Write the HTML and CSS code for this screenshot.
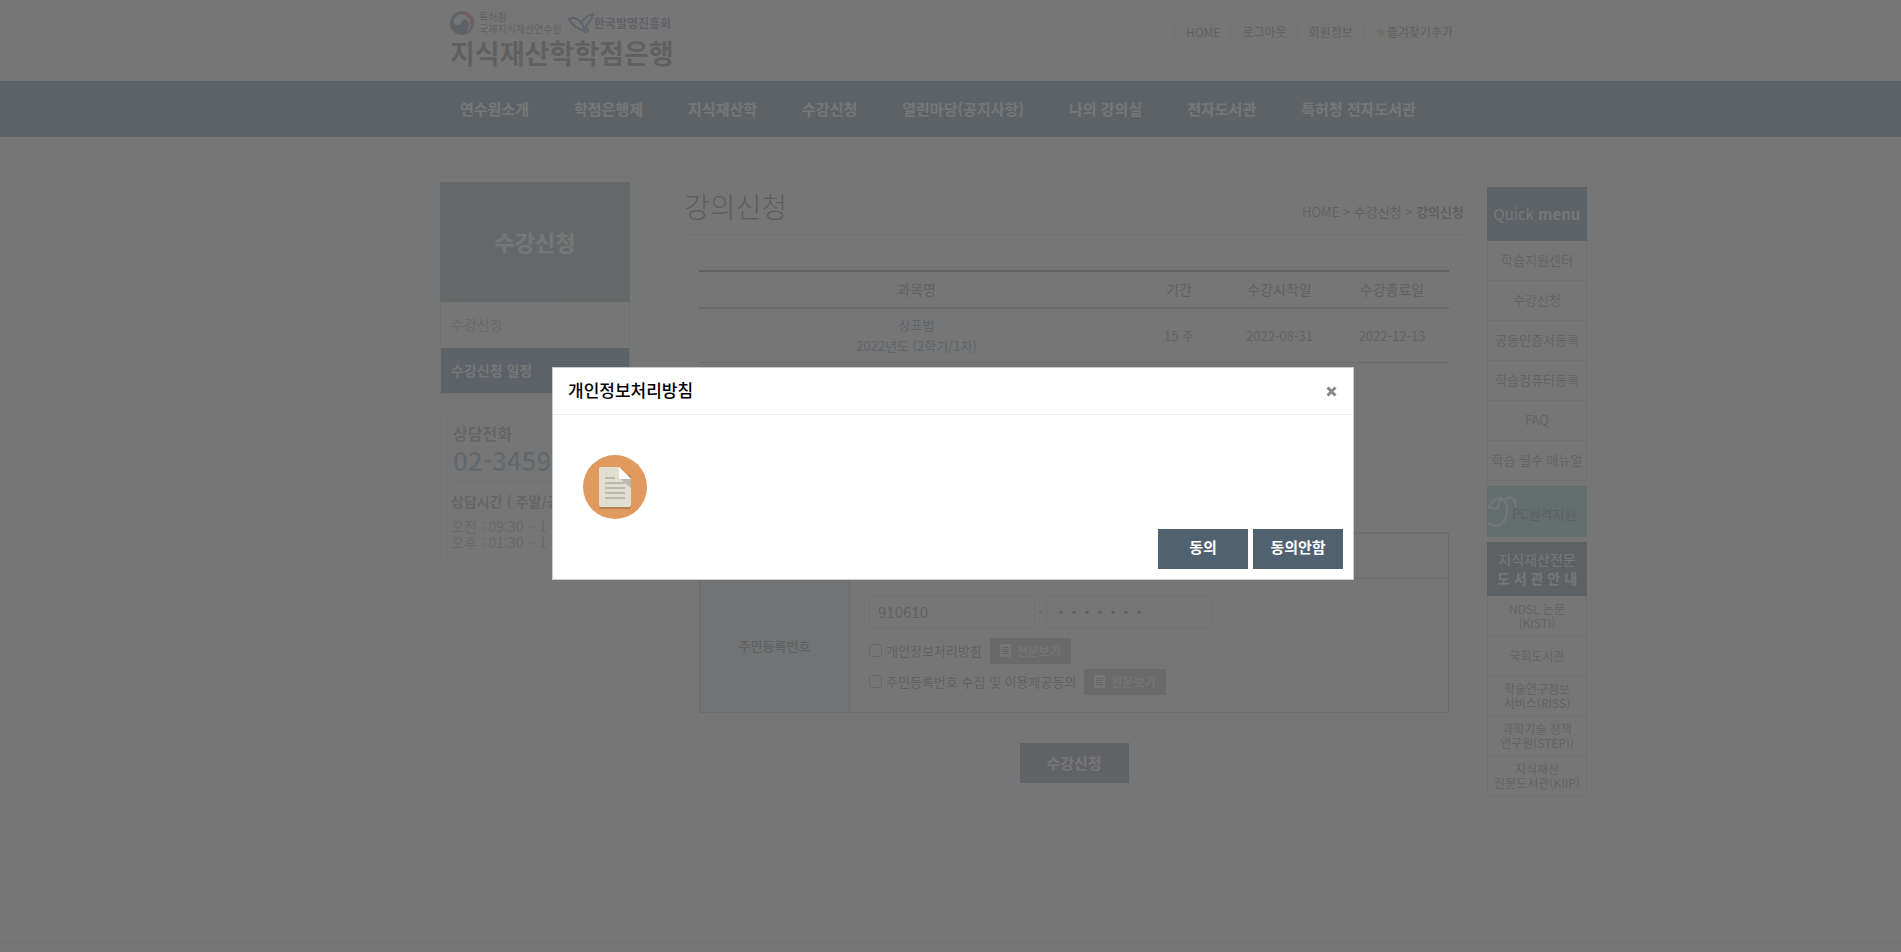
FILE: index.html
```html
<!DOCTYPE html>
<html lang="ko">
<head>
    <meta charset="UTF-8">
    <meta name="viewport" content="width=device-width, initial-scale=1.0">
    <title>지식재산학학점은행 - 강의신청</title>
    <link rel="stylesheet" href="styles.css">
</head>
<body>
    <header class="header">
        <div class="inner header-inner">
            <a class="logo" href="#">
                <span class="logo-partners">
                    <svg class="logo-gov" viewBox="0 0 24 24" aria-hidden="true">
                        <circle cx="12" cy="12" r="12" fill="#003a60"/>
                        <path d="M4 12C3 7 7 3.500 12 3.500C18 4 21 9 20.500 14C20 18 18 21 16 23C19 18 20 13 18 10C16 7 12.500 8.500 12 11C11 14 7 15.500 4 12Z" fill="#fff"/>
                        <path d="M6 4C11 -1 19 0 22.500 6C25.500 12 23 20 16 23.500C20 19 22 14 20 9C17 3 11 2 6 4Z" fill="#e0103c"/>
                    </svg>
                    <span class="logo-gov-text">특허청<br>국제지식재산연수원</span>
                    <svg class="logo-kipa" viewBox="0 0 26 20" aria-hidden="true">
                        <path d="M1 6C6 3 13 7 15 13L17 18C10 17 3 11 1 6Z" fill="none" stroke="#101a80" stroke-width="2"/>
                        <path d="M13 10C16 5 20 2 25 1C24 6 21 10 17 14" fill="none" stroke="#10509c" stroke-width="2"/>
                        <circle cx="18" cy="17" r="3" fill="#1070b0"/>
                    </svg>
                    <strong class="logo-kipa-text">한국발명진흥회</strong>
                </span>
                <strong class="logo-title">지식재산학학점은행</strong>
            </a>
            <ul class="util">
                <li><a href="#">HOME</a></li>
                <li><a href="#">로그아웃</a></li>
                <li><a href="#">회원정보</a></li>
                <li>
                    <a href="#">
                        <svg class="star" viewBox="0 0 12 12" aria-hidden="true"><path d="M6 0l1.700 4.200 4.300.3-3.300 2.800 1.100 4.500L6 9.400l-3.800 2.400 1.100-4.500L0 4.500l4.300-.3z" fill="#c8d23c"/></svg>즐겨찾기추가
                    </a>
                </li>
            </ul>
        </div>
    </header>

    <nav class="gnb">
        <ul class="inner gnb-list">
            <li><a href="#">연수원소개</a></li>
            <li><a href="#">학점은행제</a></li>
            <li><a href="#">지식재산학</a></li>
            <li><a href="#">수강신청</a></li>
            <li><a href="#">열린마당(공지사항)</a></li>
            <li><a href="#">나의 강의실</a></li>
            <li><a href="#">전자도서관</a></li>
            <li><a href="#">특허청 전자도서관</a></li>
        </ul>
    </nav>

    <div class="inner layout">
        <aside class="side">
            <h2 class="side-title">수강신청</h2>
            <ul class="side-menu">
                <li><a href="#">수강신청</a></li>
                <li><a class="active" href="#">수강신청 일정</a></li>
            </ul>
            <div class="contact">
                <h3>상담전화</h3>
                <p class="tel">02-3459-</p>
                <h4>상담시간 ( 주말/공</h4>
                <p>오전 : 09:30 ~ 1<br>오후 : 01:30 ~ 1</p>
            </div>
        </aside>

        <main class="content">
            <div class="page-head">
                <h1>강의신청</h1>
                <p class="location">HOME &gt; 수강신청 &gt; <strong>강의신청</strong></p>
            </div>

            <div class="content-body">
                <table class="course">
                    <thead>
                        <tr>
                            <th>과목명</th>
                            <th class="col-term">기간</th>
                            <th class="col-start">수강시작일</th>
                            <th class="col-end">수강종료일</th>
                        </tr>
                    </thead>
                    <tbody>
                        <tr>
                            <td><a href="#">상표법<br>2022년도 (2학기/1차)</a></td>
                            <td>15 주</td>
                            <td>2022-08-31</td>
                            <td>2022-12-13</td>
                        </tr>
                    </tbody>
                </table>

                <form class="apply">
                    <table class="apply-table">
                        <tr class="apply-name">
                            <th></th>
                            <td></td>
                        </tr>
                        <tr>
                            <th>주민등록번호</th>
                            <td>
                                <div class="jumin">
                                    <input type="text" value="910610" aria-label="주민등록번호 앞자리">
                                    <span>-</span>
                                    <input class="jumin-back" type="text" value="・・・・・・・" aria-label="주민등록번호 뒷자리">
                                </div>
                                <div class="agree">
                                    <input type="checkbox" id="agree1">
                                    <label for="agree1">개인정보처리방침</label>
                                    <button class="btn-view" type="button">
                                        <svg viewBox="0 0 11 13" aria-hidden="true"><rect width="11" height="13" rx="1" fill="#fff"/><path d="M2 3.500h7M2 5.500h7M2 7.500h7M2 9.500h7" stroke="#555"/></svg>
                                        전문보기
                                    </button>
                                </div>
                                <div class="agree">
                                    <input type="checkbox" id="agree2">
                                    <label for="agree2">주민등록번호 수집 및 이용제공동의</label>
                                    <button class="btn-view" type="button">
                                        <svg viewBox="0 0 11 13" aria-hidden="true"><rect width="11" height="13" rx="1" fill="#fff"/><path d="M2 3.500h7M2 5.500h7M2 7.500h7M2 9.500h7" stroke="#555"/></svg>
                                        전문보기
                                    </button>
                                </div>
                            </td>
                        </tr>
                    </table>
                    <button class="btn-submit" type="button">수강신청</button>
                </form>
            </div>
        </main>

        <aside class="quick">
            <h2 class="quick-title">Quick <strong>menu</strong></h2>
            <ul class="quick-list">
                <li><a href="#">학습지원센터</a></li>
                <li><a href="#">수강신청</a></li>
                <li><a href="#">공동인증서등록</a></li>
                <li><a href="#">학습컴퓨터등록</a></li>
                <li><a href="#">FAQ</a></li>
                <li><a href="#">학습 필수 매뉴얼</a></li>
            </ul>
            <a class="remote" href="#">
                <svg viewBox="0 0 30 34" aria-hidden="true"><path d="M2 12C4 7 8 3 14 3L10 14Q6 14 2 12ZM14 3C20 7 21 12 20 18C19 25 15 31 9 31Q4 31 1 28M18 8C18 3 23 1 26 4C29 6 29 9 28 12" fill="none" stroke="#fff" stroke-width="2"/></svg>
                <span>PC원격지원</span>
            </a>
            <h2 class="library-title">지식재산전문<br><strong>도 서 관 안 내</strong></h2>
            <ul class="quick-list library-list">
                <li><a href="#">NDSL 논문<br>(KISTI)</a></li>
                <li><a href="#">국회도서관</a></li>
                <li><a href="#">학술연구정보<br>서비스(RISS)</a></li>
                <li><a href="#">과학기술 정책<br>연구원(STEPI)</a></li>
                <li><a href="#">지식재산<br>전문도서관(KIIP)</a></li>
            </ul>
        </aside>
    </div>

    <footer class="footer"></footer>

    <!-- Privacy policy modal -->
    <div class="overlay">
        <div class="modal" role="dialog" aria-labelledby="modalTitle">
            <div class="modal-header">
                <h2 id="modalTitle">개인정보처리방침</h2>
                <button class="close-btn" type="button" aria-label="닫기">
                    <svg viewBox="0 0 11 11" aria-hidden="true"><path d="M1.500 1.500l8 8M9.500 1.500l-8 8" stroke="#888" stroke-width="3"/></svg>
                </button>
            </div>
            <div class="modal-body">
                <svg class="doc-icon" viewBox="0 0 64 64" aria-hidden="true">
                    <circle cx="32" cy="32" r="32" fill="#e0995e"/>
                    <path d="M16 20h32v32a2 2 0 0 1-2 2H18a2 2 0 0 1-2-2z" fill="#b87f51"/>
                    <path d="M18 12h18l12 12v26a2 2 0 0 1-2 2H18a2 2 0 0 1-2-2V14a2 2 0 0 1 2-2z" fill="#e0e0d1"/>
                    <path d="M36 12l12 12H38a2 2 0 0 1-2-2z" fill="#fff"/>
                    <path d="M37.500 24H48v9z" fill="#b9b9ac"/>
                    <path d="M22 23h10M22 28h20M22 33h20M22 38h20M22 43h20" stroke="#b9b9ac" stroke-width="2"/>
                </svg>
            </div>
            <div class="modal-footer">
                <button type="button">동의</button>
                <button type="button">동의안함</button>
            </div>
        </div>
    </div>
</body>
</html>
```
FILE: styles.css
```css
/* Reset */
* {
    margin: 0;
    padding: 0;
    box-sizing: border-box;
}

body {
    display: flex;
    flex-direction: column;
    min-height: 100vh;
    font-family: "Noto Sans CJK KR", sans-serif;
    font-size: 13px;
    line-height: 20px;
    color: #222;
    background: #fff;
}

ul {
    list-style: none;
}

a {
    color: inherit;
    text-decoration: none;
}

button,
input {
    font-family: inherit;
}

table {
    width: 100%;
    border-collapse: collapse;
}

.inner {
    width: 100%;
    max-width: 1021px;
    margin: 0 auto;
}

/* Header */
.header-inner {
    display: flex;
    justify-content: space-between;
    height: 81px;
    padding: 9px 8px 0 10px;
}

.logo-partners {
    display: flex;
    align-items: center;
    height: 27px;
}

.logo-gov {
    width: 24px;
    height: 24px;
    margin-right: 5px;
}

.logo-gov-text {
    font-size: 10px;
    line-height: 12px;
}

.logo-kipa {
    width: 26px;
    height: 20px;
    margin-left: 6px;
}

.logo-kipa-text {
    font-size: 12px;
    color: #1f2a6b;
}

.logo-title {
    display: block;
    font-size: 27px;
    line-height: 34px;
    color: #222;
}

.util {
    display: flex;
    padding-top: 15px;
    font-size: 12px;
    line-height: 15px;
}

.util li {
    height: 15px;
    padding: 0 10px 0 11px;
    border-left: 1px solid #ccc;
}

.util li:last-child {
    padding-right: 0;
}

.util a {
    display: flex;
    align-items: center;
}

.star {
    width: 12px;
    height: 12px;
}

/* Main navigation */
.gnb {
    background: #033468;
}

.gnb-list {
    display: flex;
    gap: 45px;
    padding-left: 20px;
    font-size: 15px;
    font-weight: bold;
    line-height: 56px;
    color: #fff;
    white-space: nowrap;
}

.layout {
    display: flex;
    align-items: flex-start;
    padding-top: 45px;
}

/* Left menu */
.side {
    flex: none;
    width: 190px;
    margin-right: 54px;
}

.side-title {
    height: 120px;
    font-size: 22px;
    line-height: 118px;
    text-align: center;
    color: #fff;
    background: linear-gradient(120deg, #56707f 0 38%, #527685 38% 70%, #56707f 70%);
}

.side-menu {
    border: 1px solid #ccc;
    border-top: 0;
    font-size: 14px;
    line-height: 44px;
}

.side-menu a {
    display: block;
    height: 45px;
    padding-left: 10px;
    color: #777;
}

.side-menu li:first-child {
    padding-bottom: 1px;
}

.side-menu .active {
    font-weight: bold;
    color: #fff;
    background: #033474;
}

.contact {
    height: 148px;
    margin-top: 20px;
    padding: 8px 10px;
    border: 1px solid #ddd;
    color: #777;
    font-size: 14px;
    line-height: 16px;
}

.contact h3 {
    padding-left: 2px;
    font-size: 16px;
    line-height: 20px;
    color: #555;
}

.contact .tel {
    margin-bottom: 9px;
    padding: 0 0 4px 2px;
    border-bottom: 1px dashed #aaa;
    font-size: 26px;
    font-weight: 500;
    line-height: 34px;
    color: #3c74aa;
}

.contact h4 {
    margin-bottom: 7px;
    font-size: 14px;
    line-height: 20px;
    color: #555;
}

/* Content */
.content {
    flex: none;
    width: 780px;
}

.page-head {
    display: flex;
    justify-content: space-between;
    height: 53px;
    border-bottom: 1px solid #ccc;
}

.page-head h1 {
    font-size: 28px;
    font-weight: 300;
    line-height: 48px;
    color: #000;
}

.location {
    padding-top: 20px;
}

.content-body {
    padding: 35px 15px 0;
}

.course {
    border-top: 2px solid #333;
    text-align: center;
    color: #444;
}

.course th {
    height: 37px;
    padding-bottom: 2px;
    border-bottom: 2px solid #888;
    font-size: 14px;
    font-weight: 500;
}

.course td {
    height: 54px;
    border-bottom: 1px solid #888;
    line-height: 21px;
}

.course a {
    color: #0c4a7c;
}

.col-term {
    width: 90px;
}

.col-start {
    width: 111px;
}

.col-end {
    width: 114px;
}

.apply {
    margin-top: 169px;
    text-align: center;
}

.apply-table {
    border: 1px solid #999;
    border-top: 2px solid #aaa;
}

.apply-table th {
    width: 150px;
    height: 134px;
    border-right: 1px solid #999;
    font-weight: 500;
    background: #cdd9e6;
}

.apply-table td {
    padding: 4px 20px 0 19px;
    text-align: left;
}

.apply-table .apply-name th {
    height: 46px;
}

.apply-name {
    border-bottom: 1px solid #999;
}

.jumin {
    display: flex;
    align-items: center;
    gap: 3px;
    margin-bottom: 10px;
}

.jumin input {
    width: 166px;
    height: 32px;
    padding-left: 8px;
    border: 1px solid #ccc;
    font-size: 15px;
    color: #222;
    background: #fff;
}

.jumin .jumin-back {
    font-size: 13px;
    font-weight: bold;
}

.agree {
    display: flex;
    align-items: center;
    margin-bottom: 5px;
}

.agree input {
    width: 13px;
    height: 13px;
    margin-right: 4px;
}

.btn-view {
    display: flex;
    align-items: center;
    gap: 6px;
    height: 26px;
    margin-left: 8px;
    padding: 0 10px;
    border: 0;
    font-size: 12px;
    color: #fff;
    background: #888;
}

.btn-view svg {
    width: 11px;
    height: 13px;
}

.btn-submit {
    width: 109px;
    height: 40px;
    margin-top: 30px;
    padding-bottom: 2px;
    border: 0;
    font-size: 15px;
    font-weight: bold;
    color: #fff;
    background: #303854;
}

/* Quick menu */
.quick {
    flex: none;
    width: 100px;
    margin: 5px 0 0 23px;
    text-align: center;
}

.quick-title {
    font-size: 15px;
    font-weight: normal;
    line-height: 54px;
    color: #fff;
    background: #033668;
}

.quick-list {
    border: 1px solid #ccc;
    border-width: 0 1px;
    color: #444;
    white-space: nowrap;
}

.quick-list a {
    display: flex;
    align-items: center;
    justify-content: center;
    height: 40px;
    padding-bottom: 2px;
    border-bottom: 1px solid #ccc;
}

.remote {
    display: flex;
    align-items: center;
    height: 51px;
    margin: 5px 0;
    color: #0c2233;
    background: #4aa8aa;
    white-space: nowrap;
}

.remote svg {
    flex: none;
    width: 30px;
    height: 34px;
    margin-right: -5px;
}

.remote span {
    padding-top: 4px;
}

.library-title {
    height: 54px;
    padding-top: 8px;
    font-size: 14px;
    font-weight: normal;
    line-height: 19px;
    color: #fff;
    background: #03304a;
}

.library-list {
    font-size: 12px;
    line-height: 14px;
}

.library-list a {
    padding-bottom: 0;
}

.footer {
    height: 10px;
    margin-top: auto;
    border-top: 1px solid #ccc;
}

/* Modal */
.overlay {
    position: fixed;
    inset: 0;
    display: flex;
    align-items: center;
    justify-content: center;
    padding: 0 0 5px 5px;
    background: rgba(103, 103, 103, 0.9);
}

.modal {
    width: 802px;
    border: 1px solid #ccc;
    background: #fff;
}

.modal-header {
    display: flex;
    align-items: center;
    justify-content: space-between;
    height: 47px;
    padding: 0 16px 0 15px;
    border-bottom: 1px solid #eee;
}

.modal-header h2 {
    padding-bottom: 3px;
    font-size: 17px;
    font-weight: 500;
    color: #000;
}

.close-btn {
    width: 11px;
    height: 11px;
    border: 0;
    background: none;
}

.close-btn svg {
    display: block;
}

.modal-body {
    padding: 40px 30px 10px;
}

.doc-icon {
    display: block;
    width: 64px;
    height: 64px;
}

.modal-footer {
    display: flex;
    justify-content: flex-end;
    gap: 5px;
    padding: 0 10px 10px;
}

.modal-footer button {
    width: 90px;
    height: 40px;
    padding-bottom: 5px;
    border: 0;
    font-size: 15px;
    font-weight: bold;
    color: #fff;
    background: #50616f;
}
```
